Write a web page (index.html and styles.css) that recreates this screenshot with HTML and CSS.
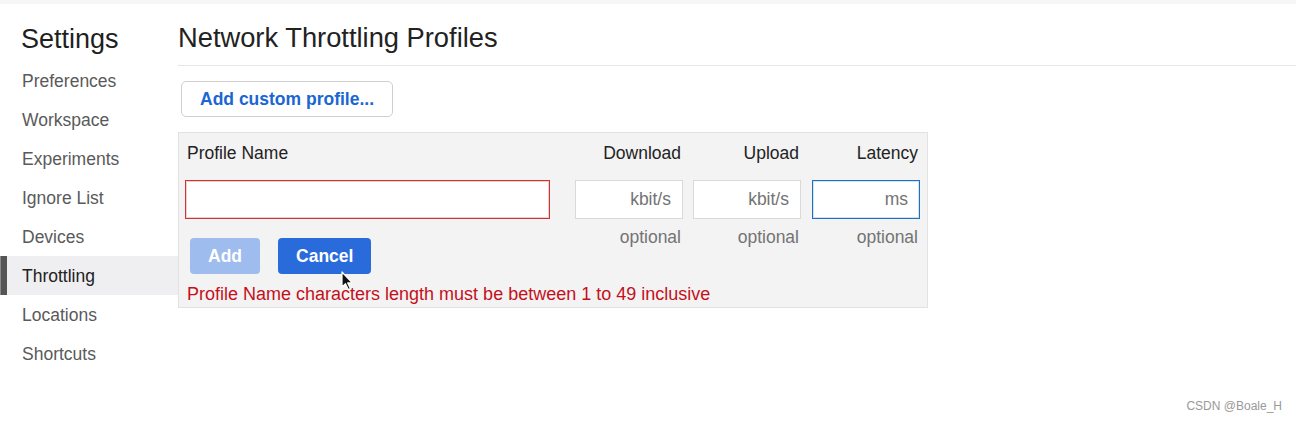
FILE: index.html
```html
<!DOCTYPE html>
<html>
<head>
<meta charset="utf-8">
<link rel="stylesheet" href="styles.css">
</head>
<body>
<div class="topstrip"></div>
<div class="app">
  <nav class="sidebar">
    <div class="side-title">Settings</div>
    <ul class="side-list">
      <li class="side-item">Preferences</li>
      <li class="side-item">Workspace</li>
      <li class="side-item">Experiments</li>
      <li class="side-item">Ignore List</li>
      <li class="side-item">Devices</li>
      <li class="side-item selected">Throttling</li>
      <li class="side-item">Locations</li>
      <li class="side-item">Shortcuts</li>
    </ul>
  </nav>
  <main class="main">
    <h1 class="page-title">Network Throttling Profiles</h1>
    <div class="content">
      <button class="btn-outline">Add custom profile...</button>
      <div class="editor">
        <div class="hdr hdr-name">Profile Name</div>
        <div class="hdr">Download</div>
        <div class="hdr">Upload</div>
        <div class="hdr">Latency</div>

        <div class="cell-input"><input class="inp inp-name inp-error" type="text"></div>
        <div class="cell-input"><input class="inp" type="text" placeholder="kbit/s"></div>
        <div class="cell-input"><input class="inp" type="text" placeholder="kbit/s"></div>
        <div class="cell-input"><input class="inp inp-focus" type="text" placeholder="ms"></div>

        <div class="actions">
          <button class="btn btn-add">Add</button>
          <button class="btn btn-cancel">Cancel</button>
        </div>
        <div class="opt">optional</div>
        <div class="opt">optional</div>
        <div class="opt">optional</div>

        <div class="error">Profile Name characters length must be between 1 to 49 inclusive</div>
      </div>
    </div>
  </main>
</div>
<svg class="cursor" width="13" height="20" viewBox="0 0 13 20">
  <path d="M1 1 L1 16 L4.5 12.7 L7.3 18.6 L9.4 17.6 L6.7 11.9 L11.2 11.9 Z" fill="#111" stroke="#fff" stroke-width="1.2" stroke-linejoin="round"/>
</svg>
<div class="watermark">CSDN @Boale_H</div>
</body>
</html>
```

FILE: styles.css
```css
html, body {
  margin: 0;
  padding: 0;
  background: #fff;
}
body {
  font-family: "Liberation Sans", Arial, sans-serif;
  font-size: 17.5px;
  color: #222;
  width: 1296px;
  height: 422px;
  overflow: hidden;
  position: relative;
}
.topstrip {
  height: 4px;
  background: #f6f6f6;
}
.app {
  display: flex;
  align-items: flex-start;
}
.sidebar {
  width: 178px;
  flex: none;
  padding-top: 19px;
}
.side-title {
  font-size: 27px;
  line-height: 32px;
  color: #1f1f1f;
  padding-left: 21px;
  margin-bottom: 6px;
}
.side-list {
  list-style: none;
  margin: 0;
  padding: 0;
}
.side-item {
  height: 39px;
  line-height: 41px;
  padding-left: 22px;
  color: #5a5a5a;
}
.side-item.selected {
  background: linear-gradient(to right, #8a8a8a 0, #8a8a8a 1px, #555 1px, #555 7px, #efeff1 7px);
  color: #222;
}
.main {
  flex: 1;
  padding-top: 18px;
}
.page-title {
  margin: 0;
  font-weight: normal;
  font-size: 27.3px;
  line-height: 32px;
  color: #222;
  padding-bottom: 11px;
  border-bottom: 1px solid #e6e6e6;
}
.content {
  padding-top: 15px;
}
.btn-outline {
  display: block;
  margin-left: 3px;
  height: 36px;
  padding: 0 18px;
  border: 1px solid #cfcfcf;
  border-radius: 5px;
  background: #fff;
  color: #1a66d2;
  font-family: inherit;
  font-size: 17.5px;
  font-weight: bold;
}
.editor {
  margin-top: 15px;
  width: 750px;
  box-sizing: border-box;
  background: #f3f3f3;
  border: 1px solid #e2e2e2;
  padding: 10px 7px 2px 6px;
  display: grid;
  grid-template-columns: 380px 108px 108px 109px;
  column-gap: 10px;
}
.hdr {
  line-height: 21px;
  text-align: right;
  padding-right: 2px;
  color: #222;
}
.hdr-name {
  text-align: left;
  padding-left: 2px;
}
.cell-input {
  margin-top: 16px;
}
.inp {
  display: block;
  box-sizing: border-box;
  width: 108px;
  height: 39px;
  margin: 0;
  border: 1px solid #d9d9d9;
  background: #fff;
  font-family: inherit;
  font-size: 17.5px;
  text-align: right;
  padding: 0 11px 0 6px;
  outline: none;
}
.inp::placeholder {
  color: #737373;
}
.inp-name {
  width: 365px;
  text-align: left;
}
.inp-error {
  border: 1px solid #cf3434;
  box-shadow: inset 0 0 0 1px rgba(207, 52, 52, 0.25);
}
.inp-focus {
  margin-left: 1px;
  border: 1px solid #1f6fc4;
  box-shadow: inset 0 0 0 1px rgba(31, 111, 196, 0.2);
}
.actions {
  display: flex;
  gap: 18px;
  margin-top: 19px;
  padding-left: 5px;
}
.btn {
  height: 36px;
  padding: 0 18px;
  border: none;
  border-radius: 4px;
  color: #fff;
  font-family: inherit;
  font-size: 17.5px;
  font-weight: bold;
}
.btn-add {
  background: #9ebced;
}
.btn-cancel {
  background: #2a6bdb;
}
.opt {
  margin-top: 8px;
  line-height: 21px;
  text-align: right;
  padding-right: 2px;
  color: #737373;
}
.error {
  grid-column: 1 / -1;
  margin-top: 10px;
  line-height: 21px;
  padding-left: 2px;
  font-size: 18px;
  color: #c4101b;
}
.cursor {
  position: absolute;
  left: 341px;
  top: 271px;
}
.watermark {
  position: absolute;
  right: 14px;
  top: 399px;
  font-size: 12px;
  line-height: 15px;
  color: #999;
}
```
